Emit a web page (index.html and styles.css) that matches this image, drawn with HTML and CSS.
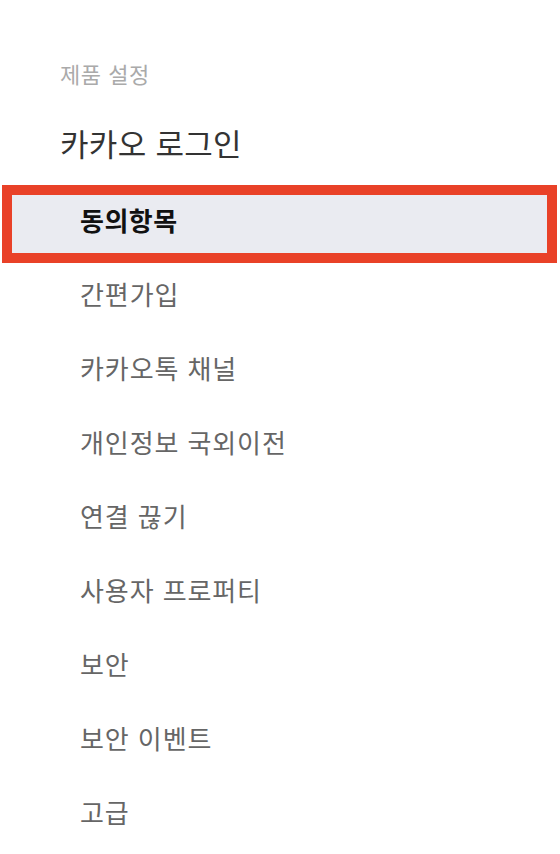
FILE: index.html
```html
<!DOCTYPE html>
<html lang="ko">
<head>
<meta charset="utf-8">
<link rel="stylesheet" href="styles.css">
</head>
<body>
<nav class="sidebar">
  <div class="group-label">제품 설정</div>
  <div class="product-title">카카오 로그인</div>
  <ul class="menu">
    <li class="menu-item selected">동의항목</li>
    <li class="menu-item">간편가입</li>
    <li class="menu-item">카카오톡 채널</li>
    <li class="menu-item">개인정보 국외이전</li>
    <li class="menu-item">연결 끊기</li>
    <li class="menu-item">사용자 프로퍼티</li>
    <li class="menu-item">보안</li>
    <li class="menu-item">보안 이벤트</li>
    <li class="menu-item">고급</li>
  </ul>
</nav>
</body>
</html>
```
FILE: styles.css
```css
html, body {
  margin: 0;
  padding: 0;
  background: #ffffff;
}
body {
  font-family: "Noto Sans CJK KR", "Noto Sans", sans-serif;
  width: 560px;
  height: 854px;
  overflow: hidden;
}
.sidebar {
  padding-top: 58px;
}
.group-label {
  padding-left: 60px;
  font-size: 22px;
  line-height: 30px;
  letter-spacing: 0.5px;
  color: #aaaaaa;
}
.product-title {
  padding-left: 60px;
  margin-top: 35px;
  font-size: 31px;
  line-height: 40px;
  letter-spacing: 0.3px;
  color: #333333;
}
.menu {
  list-style: none;
  margin: 32px 0 0;
  padding: 0;
}
.menu-item {
  box-sizing: border-box;
  height: 58px;
  margin: 0 13px 16px 12px;
  padding: 0 0 9px 68px;
  line-height: 49px;
  font-size: 26px;
  letter-spacing: 0.9px;
  color: #666666;
}
.menu-item.selected {
  background: #eaebf1;
  color: #111111;
  font-weight: 700;
  letter-spacing: 0.5px;
  outline: 10px solid #e94128;
}
```
